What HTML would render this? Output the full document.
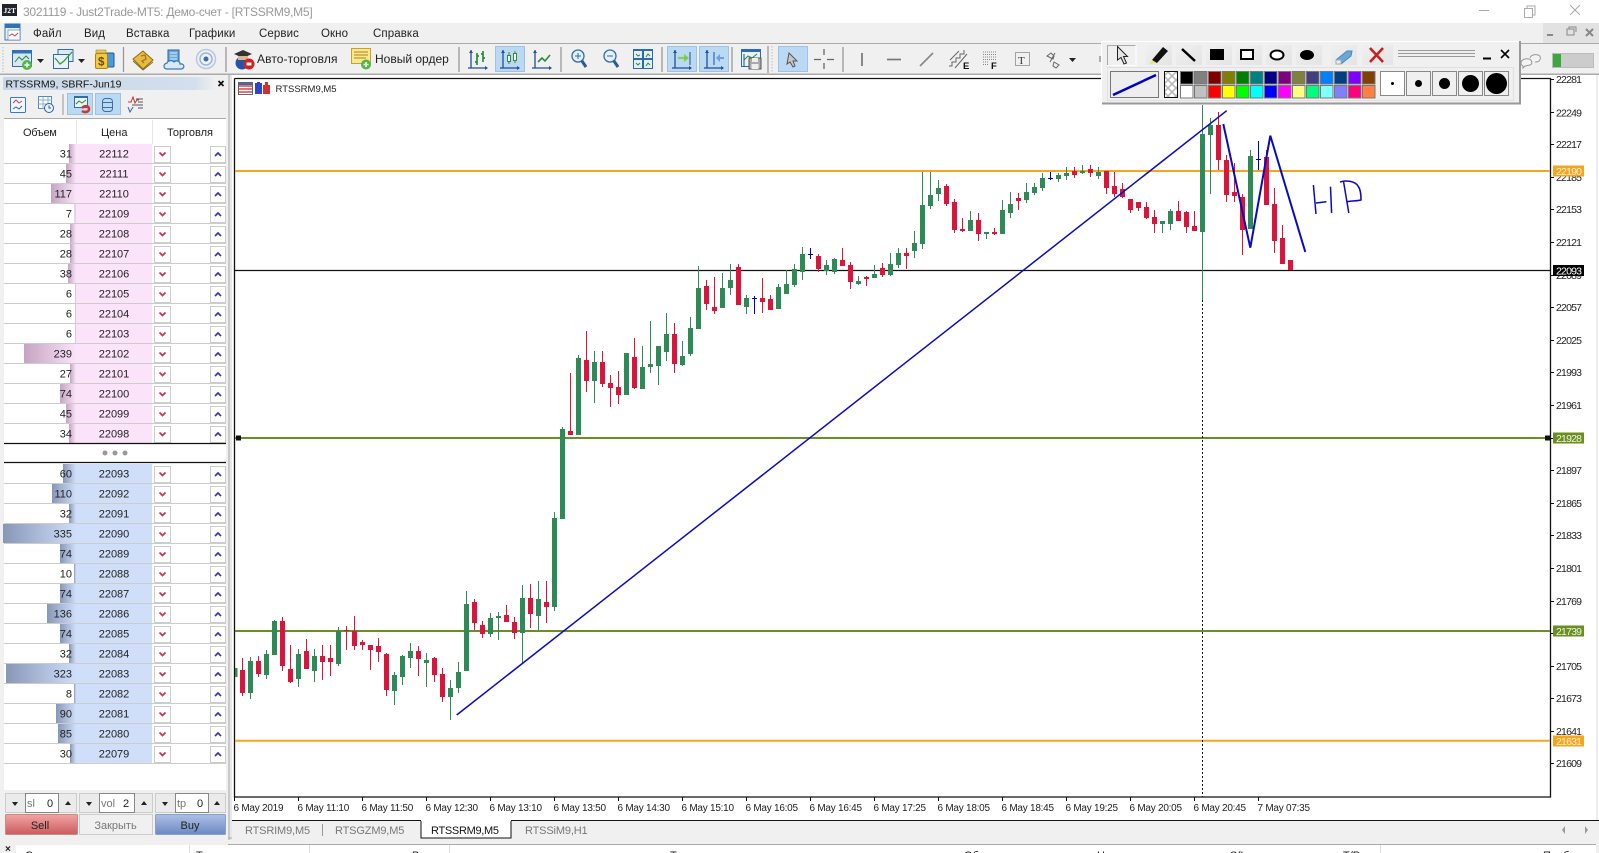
<!DOCTYPE html>
<html><head><meta charset="utf-8"><style>
html,body{margin:0;padding:0;background:#fff;width:1599px;height:853px;overflow:hidden}
svg{display:block;position:absolute;left:0;top:0}
text{font-family:"Liberation Sans","Noto Sans CJK SC",sans-serif;fill:#222}
</style></head><body>
<svg width="1599" height="853" viewBox="0 0 1599 853" xmlns="http://www.w3.org/2000/svg">
<defs>
<linearGradient id="pk" x1="0" x2="1" y1="0" y2="0"><stop offset="0" stop-color="#c4a4c2"/><stop offset="1" stop-color="#fbe3f9"/></linearGradient>
<linearGradient id="bl" x1="0" x2="1" y1="0" y2="0"><stop offset="0" stop-color="#8797b6"/><stop offset="1" stop-color="#cfdffa"/></linearGradient>
<linearGradient id="ttl" x1="0" x2="1" y1="0" y2="0"><stop offset="0" stop-color="#c8d8e8"/><stop offset=".9" stop-color="#d2dfec"/><stop offset="1" stop-color="#f0f0f0"/></linearGradient>
<linearGradient id="sell" x1="0" x2="0" y1="0" y2="1"><stop offset="0" stop-color="#f2a4a4"/><stop offset="1" stop-color="#c95c5c"/></linearGradient>
<linearGradient id="buy" x1="0" x2="0" y1="0" y2="1"><stop offset="0" stop-color="#aebfe6"/><stop offset="1" stop-color="#6c89c2"/></linearGradient>
<linearGradient id="btn" x1="0" x2="1" y1="0" y2="1"><stop offset="0" stop-color="#f0f0f0"/><stop offset="1" stop-color="#e4e4e4"/></linearGradient>
<pattern id="chk" width="8" height="8" patternUnits="userSpaceOnUse"><rect width="8" height="8" fill="#fff"/><path d="M0 0L4 4L8 0M0 8L4 4L8 8" stroke="#bbb" stroke-width="1.6" fill="none"/></pattern>
<g id="rw"><path d="M4 19.5H226" stroke="#ccc"/><rect x="154.5" y="2.5" width="16" height="16" fill="#fff" stroke="#ccc"/><rect x="210.5" y="2.5" width="15" height="16" fill="#fff" stroke="#ccc"/><path d="M159.5 8.5l3 3 3-3" fill="none" stroke="#d03048" stroke-width="1.7"/><path d="M215 12l3-3 3 3" fill="none" stroke="#3838b0" stroke-width="1.7"/></g>
<g id="ax"><path d="M3 1V19M0 19H19" stroke="#1f4f96" stroke-width="1.3" fill="none"/><path d="M1 4l2-3 2 3zM17 17l3 2-3 2z" fill="#1f4f96"/></g>
</defs>

<!-- window frames -->
<rect width="1599" height="853" fill="#f0f0f0"/>
<rect width="1599" height="23" fill="#fff"/>
<rect x="2" y="4" width="15" height="12" fill="#20242c"/>
<text x="3.5" y="13" font-size="7.5" font-weight="bold" style="fill:#fff;font-family:'Liberation Serif',serif">J2T</text>
<text x="23" y="16" font-size="12" style="fill:#999;letter-spacing:-.25px">3021119 - Just2Trade-MT5: Демо-счет - [RTSSRM9,M5]</text>
<path d="M1479 10.5H1489" stroke="#aaa"/><path d="M1524.5 8.5h8v9h-8zM1527 8.5v-2.5h8v9h-2.5" stroke="#aaa" fill="none"/><path d="M1570 5L1580 15M1580 5L1570 15" stroke="#aaa"/>

<!-- menu -->
<rect x="0" y="23" width="1599" height="20" fill="#f0f0f0"/>
<rect x="1543" y="23" width="56" height="20" fill="#e2e2e2"/>
<rect x="5" y="24" width="15" height="16" fill="#e8f0fa" stroke="#3a78b8"/><rect x="5" y="24" width="15" height="4" fill="#2f74b8"/><rect x="8" y="30" width="12" height="10" fill="#fff" stroke="#3a78b8" stroke-width=".6"/><path d="M9 36l3-2 3 2 3-3" stroke="#d04040" fill="none"/>
<g font-size="11.5" style="letter-spacing:.1px">
<text x="33" y="37">Файл</text><text x="84" y="37">Вид</text><text x="126" y="37">Вставка</text><text x="189" y="37">Графики</text><text x="259" y="37">Сервис</text><text x="321" y="37">Окно</text><text x="373" y="37">Справка</text>
</g>
<path d="M1547 35h6" stroke="#888" stroke-width="2"/><path d="M1567 29h7v6h-7zM1569 29v-2h7v5" stroke="#888" fill="none"/><path d="M1586 29l7 7M1593 29l-7 7" stroke="#888" stroke-width="2"/>

<!-- toolbar -->
<path d="M0 43.5H1599" stroke="#aaa"/>
<rect x="0" y="44" width="1599" height="30" fill="#f0f0f0"/>
<path d="M0 74.5H1599" stroke="#aaa" stroke-width="2"/>
<path d="M3 47V72" stroke="#bbb" stroke-dasharray="1.5 1.5"/>
<g stroke="#999" stroke-width="1.3"><path d="M123.5 47V72M226 47V72M459 47V72M561 47V72M662 47V72M732 47V72M768 46V73M843 47V72"/></g>
<g fill="#bcd9f3" stroke="#9cc2e4"><rect x="495.5" y="46.5" width="29" height="25"/><rect x="667.5" y="46.5" width="29" height="25"/><rect x="699.5" y="46.5" width="29" height="25"/><rect x="778.5" y="46.5" width="29" height="25"/></g>
<path d="M772 46V73" stroke="#bbb" stroke-dasharray="1.5 1.5"/>
<!-- new chart -->
<g transform="translate(12,50)"><rect x=".5" y=".5" width="19" height="16" fill="#d6e8f2" stroke="#2f6ca8"/><rect x=".5" y=".5" width="19" height="3" fill="#2f74b8"/><path d="M3 12l4-5 3 3 4-4 3 3" fill="none" stroke="#2c8a38"/><circle cx="15" cy="15" r="5" fill="#54b648"/><path d="M15 12.5v5M12.5 15h5" stroke="#fff" stroke-width="1.5"/></g>
<path d="M37 59h7l-3.5 4z" fill="#222"/>
<g transform="translate(53,49)"><rect x="5" y=".5" width="15" height="12" fill="#dcebf4" stroke="#2f6ca8"/><rect x=".5" y="5.5" width="15" height="14" fill="#e8f2f8" stroke="#2f6ca8"/><path d="M2 9l5 6 4-3 8-9" fill="none" stroke="#3a9a38" stroke-width="1.3"/></g>
<path d="M78 59h7l-3.5 4z" fill="#222"/>
<g transform="translate(95,49)"><rect x="7" y="4" width="12" height="14" rx="1" fill="#4a9ad8" stroke="#205a90"/><rect x="1" y="1" width="10" height="3" fill="#e8c860" stroke="#a88a20" stroke-width=".6"/><rect x=".5" y="4.5" width="12" height="15" rx="1.5" fill="#f4c840" stroke="#a88420"/><text x="3" y="16.5" font-size="11.5" font-weight="bold" style="fill:#704c00">$</text></g>
<g transform="translate(133,50)"><path d="M0 9L10 1L20 10L10 19z" fill="#e6bc40" stroke="#8a6c1c"/><path d="M0 11L10 20L20 12" fill="none" stroke="#8a6c1c"/><path d="M8 6l4-1 1 4-4 2 2 2" stroke="#a87818" fill="none" stroke-width="1.3"/></g>
<g transform="translate(164,49)"><rect x="4" y="1" width="11" height="12" fill="#6aa8e0" stroke="#2a62a0"/><path d="M6 4h7M6 7h7M6 10h7" stroke="#dceefc"/><path d="M3 20c-4 0-4-5 0-6 1-3 6-3 7-1 3-2 6-1 6 2 5-1 5 5 1 5z" fill="#d8e8f6" stroke="#3a78b8" stroke-width="1.2"/></g>
<g transform="translate(206,59)" fill="none"><circle r="9.5" stroke="#b8c8e0" stroke-width="1.5"/><circle r="6" stroke="#9cb4d8" stroke-width="1.5"/><circle r="2.5" fill="#3a6cb0"/></g>
<g transform="translate(234,49)"><circle cx="8" cy="14" r="6.5" fill="#2456a8"/><path d="M0 5L9 1L18 5L9 9z" fill="#333"/><path d="M4 7v4h10V7" fill="#d8b890"/><circle cx="15" cy="15" r="5.5" fill="#d02020"/><rect x="12.5" y="13.5" width="5" height="3" fill="#fff"/></g>
<text x="257" y="63" font-size="12" style="letter-spacing:.1px">Авто-торговля</text>
<g transform="translate(351,48)"><rect x=".5" y=".5" width="19" height="15" fill="#fbe88c" stroke="#c8a030"/><path d="M3 4h14M3 7h14M3 10h12" stroke="#a88420"/><circle cx="15" cy="16.5" r="5" fill="#54b648"/><path d="M15 14v5M12.5 16.5h5" stroke="#fff" stroke-width="1.5"/></g>
<text x="375" y="63" font-size="12">Новый ордер</text>
<!-- chart modes -->
<g transform="translate(468,49)"><use href="#ax"/><path d="M9 4v12M7 13h2M9 7h2M15 2v11M13 5h2M15 9h2" stroke="#2c8a38" stroke-width="1.7" fill="none"/></g>
<g transform="translate(500,49)"><use href="#ax"/><path d="M9 3v12M15 2v12" stroke="#2c8a38"/><rect x="7.5" y="6.5" width="3" height="6" fill="#fff" stroke="#2c8a38"/><rect x="13.5" y="4.5" width="3" height="7" fill="#fff" stroke="#2c8a38"/></g>
<g transform="translate(532,49)"><use href="#ax"/><path d="M6 13l4-4 3 3 5-6" stroke="#2c8a38" stroke-width="1.6" fill="none"/></g>
<!-- zoom -->
<g transform="translate(571,49)"><circle cx="7" cy="7" r="6" fill="#e4f0fa" stroke="#2f6ca8" stroke-width="1.3"/><path d="M4 7h6M7 4v6" stroke="#2f6ca8"/><path d="M11 12l4 6" stroke="#2a5a9c" stroke-width="3"/></g>
<g transform="translate(603,49)"><circle cx="7" cy="7" r="6" fill="#e4f0fa" stroke="#2f6ca8" stroke-width="1.3"/><path d="M4 7h6" stroke="#2f6ca8"/><path d="M11 12l4 6" stroke="#2a5a9c" stroke-width="3"/></g>
<g transform="translate(633,49)"><rect x=".5" y=".5" width="19" height="19" fill="#e4f0f6" stroke="#2a6ab0"/><path d="M0 10h20M10 0v20" stroke="#2a6ab0" stroke-width="2"/><rect x="0" y="0" width="20" height="2" fill="#2a6ab0"/><path d="M3 5l2 2 2-1M13 8l2-3 2 2M3 14l2 2 2-2M13 17l2-3 2 2" stroke="#2c8a38" fill="none"/></g>
<g transform="translate(672,49)"><use href="#ax"/><path d="M18 3v13" stroke="#1f4f96"/><path d="M6 8h6v-3l5 4-5 4v-3H6z" fill="#7cc850" stroke="#a8d890" stroke-width=".5"/></g>
<g transform="translate(704,49)"><use href="#ax"/><path d="M10 3v13" stroke="#1f4f96"/><path d="M20 8h-4v-3l-4 4 4 4v-3h4z" fill="#6aa0e0"/></g>
<g transform="translate(741,49)"><rect x=".5" y=".5" width="19" height="17" fill="#e8f2f8" stroke="#2a6ab0"/><rect x="0" y="0" width="20" height="3" fill="#2a6ab0"/><path d="M3 11l4-4 4 2 5-4" stroke="#2c8a38" fill="none"/><path d="M3 5v13" stroke="#1f4f96"/><rect x="8" y="9" width="12" height="11" fill="#aaa" stroke="#555"/><rect x="10.5" y="15" width="7" height="5" fill="#eee"/><rect x="11" y="9" width="6" height="4" fill="#eee"/></g>
<!-- drawing tools -->
<path d="M789 53L797 61L793 61L795 66L793 67L790 62L787 64Z" fill="#c8c8c8" stroke="#555"/>
<path d="M814 59.5h7M827 59.5h7M824 49v6M824 63v6" stroke="#666" stroke-width="1.3"/>
<path d="M862 53V66" stroke="#888" stroke-width="2"/>
<path d="M887 59.5h14" stroke="#777" stroke-width="1.7"/>
<path d="M920 66l13-13" stroke="#888" stroke-width="1.7"/>
<path d="M949 66h3v-4h4v-4h4v-4h4v-4M955 68l12-14M950 60l9-9" stroke="#666" fill="none"/>
<text x="963" y="69" font-size="9.5" font-weight="bold" style="fill:#111">E</text>
<path d="M983 52h14M983 54.5h14M983 57h14M983 59.5h14M983 62h6M983 64.5h6" stroke="#888" stroke-dasharray="1 1"/>
<text x="991" y="69" font-size="9.5" font-weight="bold" style="fill:#111">F</text>
<rect x="1015.5" y="52.5" width="14" height="13" fill="none" stroke="#555" stroke-dasharray="1 1"/>
<text x="1018" y="64" font-size="11" style="fill:#333;font-family:'Liberation Serif',serif">T</text>
<path d="M1047 56l4-3 3 3-1 3zM1050 62l5-9M1054 62l5 3-3 3-3-2z" stroke="#666" fill="none"/>
<path d="M1069 58h7l-3.5 4z" fill="#222"/>
<path d="M1100 56v6" stroke="#666"/>
<path d="M1521 63c0-3 4-5 8-4 3 1 4 5 1 6l-5 1-2 2 0-2c-2-1-2-2-2-3zM1530 58c1-3 5-4 8-3 3 1 3 4 1 6-1 1-3 1-4 1" fill="#f4f4f4" stroke="#999"/>
<rect x="1552" y="53" width="42" height="15" fill="#ccc"/><rect x="1552" y="53" width="9" height="15" fill="#3da83d"/><rect x="1552.5" y="53.5" width="41" height="14" fill="none" stroke="#bbb"/>

<!-- chart -->
<rect x="228" y="75" width="1371" height="745" fill="#fff"/>
<rect x="227" y="75" width="5" height="770" fill="#e8e8e8"/>
<path d="M229 75V840" stroke="#aaa"/>
<path d="M234.5 78.5V797H1550.5V78.5H234.5" fill="none" stroke="#111" stroke-width="1.3"/>
<path d="M1597 75V820" stroke="#ddd"/>
<!-- chart labels icons -->
<rect x="238.5" y="82.5" width="14" height="12" fill="#fff" stroke="#666"/><path d="M239 86h13M239 89h13M239 92h13" stroke="#d04848" stroke-width="1.5"/><path d="M239 84h13" stroke="#4466b0" stroke-width="2"/>
<rect x="255" y="83" width="7" height="11" fill="#2a48c8"/><rect x="263" y="85" width="7" height="9" fill="#d03030"/><rect x="265" y="82" width="3" height="3" fill="#d03030"/><rect x="257" y="82" width="3" height="3" fill="#2a48c8"/>
<text x="275.5" y="92" font-size="9.5" style="fill:#222">RTSSRM9,M5</text>

<!-- horizontal levels -->
<path d="M235 171H1550M235 740.7H1550" stroke="#f5a61e" stroke-width="2"/>
<path d="M235 270.5H1550" stroke="#111" stroke-width="1.3"/>
<path d="M235 438H1550M235 631H1550" stroke="#6b8e23" stroke-width="2"/>
<path d="M236 435.5h5v5h-5zM1545 435.5h5v5h-5z" fill="#111"/>

<!-- candles -->
<rect x="235" y="668" width="2.5" height="9" fill="#2e8b57"/>
<path fill="none" stroke="#2e8b57" stroke-width="1" d="M250.5 657V699M266.5 650V679M274.5 620V655M298.5 649V687M314.5 649V682M338.5 627V666M394.5 672V705M402.5 655V685M410.5 643V668M426.5 653V687M450.5 680V720M458.5 662V693M466.5 591V671M490.5 613V637M498.5 612V640M522.5 585V664M538.5 581V630M554.5 512V611M562.5 427V519M578.5 355V435M594.5 351V403M626.5 353V395M642.5 346V389M650.5 321V373M658.5 346V385M666.5 313V361M682.5 341V366M690.5 317V356M698.5 266V329M722.5 273V308M730.5 264V295M746.5 295V314M778.5 284V309M786.5 270V294M794.5 264V287M802.5 247V280M826.5 260V275M834.5 258V274M858.5 276V285M874.5 265V278M890.5 253V276M898.5 248V268M914.5 231V258M922.5 172V249M930.5 172V209M938.5 180V201M970.5 211V231M986.5 232V239M1002.5 200V234M1010.5 192V218M1026.5 183V203M1034.5 183V195M1042.5 173V191M1058.5 173V182M1066.5 167V180M1082.5 165V174M1098.5 167V179M1162.5 221V233M1170.5 209V230M1202.5 105V300M1210.5 118V194M1250.5 150V228"/>
<path fill="none" stroke="#2e8b57" stroke-width="5" d="M250.5 661V693M266.5 654V675M274.5 621V655M298.5 654V679M314.5 656V671M338.5 631V664M394.5 675V691M402.5 656V677M410.5 651V658M426.5 660V663M450.5 688V697M458.5 672V688M466.5 604V671M490.5 618V634M498.5 616V618M522.5 598V633M538.5 599V616M554.5 518V607M562.5 429V519M578.5 358V435M594.5 362V381M626.5 353V395M642.5 367V389M650.5 364V367M658.5 346V366M666.5 334V352M682.5 356V365M690.5 328V354M698.5 288V329M722.5 288V308M730.5 280V288M746.5 298V307M778.5 287V309M786.5 284V294M794.5 269V285M802.5 254V272M826.5 265V271M834.5 259V272M858.5 281V284M874.5 274V278M890.5 264V275M898.5 253V265M914.5 243V251M922.5 205V244M930.5 195V206M938.5 188V194M970.5 220V231M986.5 232V234M1002.5 210V234M1010.5 204V213M1026.5 192V200M1034.5 187V193M1042.5 178V188M1058.5 175V179M1066.5 173V176M1082.5 171V173M1098.5 172V176M1162.5 221V224M1170.5 211V224M1202.5 134V232M1210.5 125V135M1250.5 156V229"/>
<path fill="none" stroke="#dc143c" stroke-width="1" d="M242.5 658V696M258.5 656V677M282.5 617V671M290.5 645V683M306.5 639V669M322.5 645V680M330.5 645V676M346.5 626V650M354.5 616V650M362.5 640V650M370.5 645V670M378.5 638V662M386.5 653V696M418.5 646V676M434.5 657V682M442.5 668V702M474.5 599V630M482.5 621V638M506.5 605V622M514.5 617V639M530.5 584V628M546.5 581V623M570.5 373V435M586.5 331V392M602.5 351V387M610.5 375V407M618.5 371V404M634.5 338V389M674.5 323V373M706.5 280V310M714.5 277V314M738.5 264V305M762.5 278V313M770.5 295V310M818.5 254V272M842.5 248V266M850.5 262V289M866.5 276V286M882.5 263V277M906.5 248V269M946.5 184V206M954.5 199V233M962.5 218V232M978.5 213V241M994.5 228V235M1018.5 193V210M1074.5 167V178M1090.5 165V177M1106.5 171V194M1114.5 172V197M1122.5 183V198M1130.5 199V213M1138.5 202V211M1146.5 202V219M1154.5 210V233M1178.5 201V221M1186.5 211V233M1194.5 211V231M1218.5 112V170M1226.5 155V202M1234.5 163V202M1242.5 194V255M1266.5 150V205M1274.5 188V253M1282.5 225V264M1290.5 260V270"/>
<path fill="none" stroke="#dc143c" stroke-width="5" d="M242.5 670V693M258.5 661V674M282.5 621V666M290.5 669V682M306.5 651V669M322.5 656V662M330.5 658V662M346.5 630V631M354.5 631V646M362.5 642V645M370.5 645V650M378.5 646V652M386.5 654V690M418.5 651V659M434.5 658V675M442.5 674V697M474.5 602V623M482.5 625V634M506.5 615V622M514.5 622V633M530.5 598V614M546.5 602V607M570.5 431V435M586.5 360V381M602.5 362V384M610.5 383V388M618.5 387V395M634.5 357V388M674.5 334V364M706.5 286V304M714.5 307V311M738.5 267V305M762.5 298V302M770.5 299V310M818.5 256V269M842.5 260V266M850.5 265V282M866.5 277V279M882.5 268V275M906.5 253V256M946.5 186V204M954.5 202V230M962.5 229V231M978.5 220V234M994.5 232V234M1018.5 198V201M1074.5 171V175M1090.5 169V173M1106.5 171V188M1114.5 186V194M1122.5 189V197M1130.5 199V210M1138.5 202V208M1146.5 207V218M1154.5 217V224M1178.5 211V221M1186.5 212V227M1194.5 226V231M1218.5 125V160M1226.5 160V195M1234.5 192V196M1242.5 197V230M1266.5 157V205M1274.5 204V241M1282.5 238V264M1290.5 260V270"/>
<path fill="none" stroke="#0000c0" stroke-width="1" d="M754.5 296V314M752 298.5H757M810.5 248V259M808 254.5H813M1050.5 172V180M1048 178.5H1053M1258.5 141V170M1256 159.5H1261"/>
<path d="M1202.5 300V797" stroke="#111" stroke-dasharray="2 2"/>

<!-- drawn lines -->
<path d="M456.7 715L1226.7 110.7" stroke="#0a0ac0" stroke-width="1.5" fill="none"/>
<path d="M1223.3 124L1250.3 247.7L1270.3 135.7L1305.3 252" stroke="#0a0ac0" stroke-width="2" fill="none"/>
<path d="M1313.4 185L1316 214M1316 203L1326.4 201.7M1330.5 186.7L1331.6 213M1343.6 182L1348.8 213M1340 182C1346 180 1355 181 1358 186C1361 190 1361 196 1361 200C1357 201 1351 201 1347 201.7" stroke="#0a0ac0" stroke-width="1.5" fill="none"/>

<!-- price axis -->
<g stroke="#111"><path d="M1550 79.5h4M1550 112.5h4M1550 144.5h4M1550 177.5h4M1550 209.5h4M1550 242.5h4M1550 275.5h4M1550 307.5h4M1550 340.5h4M1550 372.5h4M1550 405.5h4M1550 438.5h4M1550 470.5h4M1550 503.5h4M1550 535.5h4M1550 568.5h4M1550 601.5h4M1550 633.5h4M1550 666.5h4M1550 698.5h4M1550 731.5h4M1550 763.5h4"/></g>
<g font-size="10.5" style="letter-spacing:-.8px">
<text x="1556" y="83">22281</text><text x="1556" y="116.5">22249</text><text x="1556" y="148">22217</text><text x="1556" y="181">22185</text><text x="1556" y="213">22153</text><text x="1556" y="246">22121</text><text x="1556" y="279">22089</text><text x="1556" y="311">22057</text><text x="1556" y="344">22025</text><text x="1556" y="376">21993</text><text x="1556" y="409">21961</text><text x="1556" y="474">21897</text><text x="1556" y="507">21865</text><text x="1556" y="539">21833</text><text x="1556" y="572">21801</text><text x="1556" y="605">21769</text><text x="1556" y="670">21705</text><text x="1556" y="702">21673</text><text x="1556" y="735">21641</text><text x="1556" y="767">21609</text>
</g>
<rect x="1553" y="165.5" width="31" height="11" fill="#f5a61e"/><rect x="1553" y="265" width="31" height="11" fill="#000"/><rect x="1553" y="432.5" width="31" height="11" fill="#6b8e23"/><rect x="1553" y="625.5" width="31" height="11" fill="#6b8e23"/><rect x="1553" y="735.5" width="31" height="11" fill="#f5a61e"/>
<g font-size="10.5" style="letter-spacing:-.8px">
<text x="1556" y="175" style="fill:#fff3d8">22190</text><text x="1556" y="274.5" style="fill:#fff">22093</text><text x="1556" y="442" style="fill:#f4f4e0">21928</text><text x="1556" y="635" style="fill:#f4f4e0">21739</text><text x="1556" y="745" style="fill:#fff3d8">21631</text>
</g>
<!-- time axis -->
<path d="M234.5 797v4M298.5 797v4M362.5 797v4M426.5 797v4M490.5 797v4M554.5 797v4M618.5 797v4M682.5 797v4M746.5 797v4M810.5 797v4M874.5 797v4M938.5 797v4M1002.5 797v4M1066.5 797v4M1130.5 797v4M1194.5 797v4M1258.5 797v4" stroke="#111"/>
<g font-size="10" style="letter-spacing:-.25px">
<text x="233.5" y="811">6 May 2019</text><text x="297.5" y="811">6 May 11:10</text><text x="361.5" y="811">6 May 11:50</text><text x="425.5" y="811">6 May 12:30</text><text x="489.5" y="811">6 May 13:10</text><text x="553.5" y="811">6 May 13:50</text><text x="617.5" y="811">6 May 14:30</text><text x="681.5" y="811">6 May 15:10</text><text x="745.5" y="811">6 May 16:05</text><text x="809.5" y="811">6 May 16:45</text><text x="873.5" y="811">6 May 17:25</text><text x="937.5" y="811">6 May 18:05</text><text x="1001.5" y="811">6 May 18:45</text><text x="1065.5" y="811">6 May 19:25</text><text x="1129.5" y="811">6 May 20:05</text><text x="1193.5" y="811">6 May 20:45</text><text x="1257.5" y="811">7 May 07:35</text>
</g>

<!-- tabs -->
<rect x="232" y="820" width="1367" height="20" fill="#f0f0f0"/>
<path d="M232 820.5H1599" stroke="#111"/>
<path d="M232 840.5H1599" stroke="#ddd"/>
<path d="M322.5 824V836" stroke="#999"/>
<rect x="421" y="820" width="90" height="18" fill="#fff"/><path d="M421 820.5V838H511V820.5" fill="none" stroke="#111"/><path d="M421 820.5H511" stroke="#fff" stroke-width="1.2"/>
<g font-size="11" style="letter-spacing:-.15px">
<text x="245" y="834" style="fill:#777">RTSRIM9,M5</text><text x="335" y="834" style="fill:#777">RTSGZM9,M5</text><text x="431" y="834" style="fill:#111;letter-spacing:-.3px">RTSSRM9,M5</text><text x="525" y="834" style="fill:#777">RTSSiM9,H1</text>
</g>
<path d="M1565 826v8l-3-4zM1585 826v8l3-4z" fill="#999"/>

<!-- bottom strip -->
<rect x="0" y="840" width="1599" height="13" fill="#f0f0f0"/>
<rect x="16" y="845" width="1580" height="8" fill="#fff"/>
<path d="M16 844.5H1596" stroke="#aaa"/>
<path d="M189.5 845V853M309.5 845V853M449.5 845V853M1380.5 845V853" stroke="#ddd"/>
<text x="5" y="852" font-size="10" font-weight="bold" style="fill:#222">×</text>
<g font-size="11">
<text x="25" y="859">Символ</text><text x="196" y="859">Тикет</text><text x="412" y="859">Время</text><text x="670" y="859">Тип</text><text x="964" y="859">Объем</text><text x="1097" y="859">Цена</text><text x="1230" y="859">S/L</text><text x="1343" y="859">T/P</text><text x="1543" y="859">Прибыль</text>
</g>

<!-- left panel -->
<rect x="0" y="75" width="228" height="770" fill="#f0f0f0"/>
<rect x="3" y="77" width="213" height="13" fill="url(#ttl)"/>
<text x="5.5" y="87.5" font-size="10.5" style="fill:#111">RTSSRM9, SBRF-Jun19</text>
<path d="M218.5 81l5 5M223.5 81l-5 5" stroke="#111" stroke-width="1.7"/>
<g fill="#bcd9f3" stroke="#9cc2e4"><rect x="67.5" y="93.5" width="25" height="21"/><rect x="95.5" y="93.5" width="25" height="21"/></g>
<path d="M63 94V115" stroke="#999"/>
<rect x="10.5" y="97.5" width="15" height="15" rx="1" fill="#f2f8fd" stroke="#3a78c0"/><path d="M13 103l3-3 3 3 3-2" stroke="#d04040" fill="none"/><path d="M13 109l3-2 3 2 3-3" stroke="#2a6ab0" fill="none"/>
<g transform="translate(38,96)"><rect x=".5" y=".5" width="13" height="12" fill="#fff" stroke="#5a8ab8"/><path d="M1 4h13M1 8h13M5 1v12M10 1v12" stroke="#8ab0d0"/><circle cx="11" cy="12" r="4.5" fill="#e8f2fa" stroke="#2a62a0"/><path d="M11 9.5V12h2" stroke="#2a62a0" fill="none"/></g>
<g transform="translate(74,96)"><rect x=".5" y=".5" width="13" height="11" fill="#e8f4f0" stroke="#2f6ca8"/><rect x="0" y="0" width="14" height="2" fill="#2f6ca8"/><path d="M2 8l3-3 3 2 4-3" stroke="#2c8a38" fill="none"/><path d="M8 12c3-3 7-2 7 1s-4 4-7 2" fill="none" stroke="#d03828" stroke-width="2.5"/></g>
<g transform="translate(102,96)" fill="none" stroke="#3a6ea8"><rect x=".5" y="2.5" width="10" height="13" rx="3"/><path d="M.5 6.5h10M.5 11.5h10"/></g>
<g transform="translate(128,95)" fill="none"><path d="M0 7h3l2-5 2 6 2-3h2" stroke="#d03030"/><path d="M8 4h7M10 7h5M4 10h11M10 13h5" stroke="#555"/><path d="M0 12l2 5 3-5" stroke="#2a62b0"/></g>

<rect x="4" y="118" width="222" height="672" fill="#fff"/>
<path d="M4 118.5H226" stroke="#aaa"/>
<path d="M76.5 120V144M152.5 120V144" stroke="#e6e6e6"/>
<g font-size="11">
<text x="23" y="136" style="letter-spacing:-.3px">Объем</text><text x="101" y="136">Цена</text><text x="167" y="136">Торговля</text>
</g>
<rect x="76" y="144" width="76" height="299" fill="#fbe3f9"/>
<rect x="76" y="464" width="76" height="300" fill="#cfdffa"/>
<g fill="url(#pk)"><rect x="69" y="144" width="7" height="19"/><rect x="66" y="164" width="10" height="19"/><rect x="51" y="184" width="25" height="19"/><rect x="74.5" y="204" width="1.5" height="19"/><rect x="70" y="224" width="6" height="19"/><rect x="70" y="244" width="6" height="19"/><rect x="68" y="264" width="8" height="19"/><rect x="75" y="284" width="1" height="19"/><rect x="75" y="304" width="1" height="19"/><rect x="75" y="324" width="1" height="19"/><rect x="24" y="344" width="52" height="19"/><rect x="70" y="364" width="6" height="19"/><rect x="60" y="384" width="16" height="19"/><rect x="66" y="404" width="10" height="19"/><rect x="69" y="424" width="7" height="19"/></g>
<g fill="url(#bl)"><rect x="63" y="464" width="13" height="19"/><rect x="52" y="484" width="24" height="19"/><rect x="69" y="504" width="7" height="19"/><rect x="3" y="524" width="73" height="19"/><rect x="60" y="544" width="16" height="19"/><rect x="74" y="564" width="2" height="19"/><rect x="60" y="584" width="16" height="19"/><rect x="47" y="604" width="29" height="19"/><rect x="60" y="624" width="16" height="19"/><rect x="69" y="644" width="7" height="19"/><rect x="6" y="664" width="70" height="19"/><rect x="74" y="684" width="2" height="19"/><rect x="56" y="704" width="20" height="19"/><rect x="58" y="724" width="18" height="19"/><rect x="70" y="744" width="6" height="19"/></g>
<use href="#rw" y="144"/><use href="#rw" y="164"/><use href="#rw" y="184"/><use href="#rw" y="204"/><use href="#rw" y="224"/><use href="#rw" y="244"/><use href="#rw" y="264"/><use href="#rw" y="284"/><use href="#rw" y="304"/><use href="#rw" y="324"/><use href="#rw" y="344"/><use href="#rw" y="364"/><use href="#rw" y="384"/><use href="#rw" y="404"/><use href="#rw" y="424"/>
<use href="#rw" y="464"/><use href="#rw" y="484"/><use href="#rw" y="504"/><use href="#rw" y="524"/><use href="#rw" y="544"/><use href="#rw" y="564"/><use href="#rw" y="584"/><use href="#rw" y="604"/><use href="#rw" y="624"/><use href="#rw" y="644"/><use href="#rw" y="664"/><use href="#rw" y="684"/><use href="#rw" y="704"/><use href="#rw" y="724"/><use href="#rw" y="744"/>
<rect x="4" y="444" width="222" height="19" fill="#fff"/>
<path d="M4 443.5H226M4 462.5H226" stroke="#111" stroke-width="1.2"/>
<circle cx="105" cy="453" r="2.5" fill="#999"/><circle cx="115" cy="453" r="2.5" fill="#999"/><circle cx="125" cy="453" r="2.5" fill="#999"/>
<g font-size="11" text-anchor="end">
<text x="72" y="157.5">31</text><text x="72" y="177.5">45</text><text x="72" y="197.5">117</text><text x="72" y="217.5">7</text><text x="72" y="237.5">28</text><text x="72" y="257.5">28</text><text x="72" y="277.5">38</text><text x="72" y="297.5">6</text><text x="72" y="317.5">6</text><text x="72" y="337.5">6</text><text x="72" y="357.5">239</text><text x="72" y="377.5">27</text><text x="72" y="397.5">74</text><text x="72" y="417.5">45</text><text x="72" y="437.5">34</text>
<text x="72" y="477.5">60</text><text x="72" y="497.5">110</text><text x="72" y="517.5">32</text><text x="72" y="537.5">335</text><text x="72" y="557.5">74</text><text x="72" y="577.5">10</text><text x="72" y="597.5">74</text><text x="72" y="617.5">136</text><text x="72" y="637.5">74</text><text x="72" y="657.5">32</text><text x="72" y="677.5">323</text><text x="72" y="697.5">8</text><text x="72" y="717.5">90</text><text x="72" y="737.5">85</text><text x="72" y="757.5">30</text>
</g>
<g font-size="11" text-anchor="middle">
<text x="114" y="157.5">22112</text><text x="114" y="177.5">22111</text><text x="114" y="197.5">22110</text><text x="114" y="217.5">22109</text><text x="114" y="237.5">22108</text><text x="114" y="257.5">22107</text><text x="114" y="277.5">22106</text><text x="114" y="297.5">22105</text><text x="114" y="317.5">22104</text><text x="114" y="337.5">22103</text><text x="114" y="357.5">22102</text><text x="114" y="377.5">22101</text><text x="114" y="397.5">22100</text><text x="114" y="417.5">22099</text><text x="114" y="437.5">22098</text>
<text x="114" y="477.5">22093</text><text x="114" y="497.5">22092</text><text x="114" y="517.5">22091</text><text x="114" y="537.5">22090</text><text x="114" y="557.5">22089</text><text x="114" y="577.5">22088</text><text x="114" y="597.5">22087</text><text x="114" y="617.5">22086</text><text x="114" y="637.5">22085</text><text x="114" y="657.5">22084</text><text x="114" y="677.5">22083</text><text x="114" y="697.5">22082</text><text x="114" y="717.5">22081</text><text x="114" y="737.5">22080</text><text x="114" y="757.5">22079</text>
</g>

<!-- bottom spinners -->
<rect x="4" y="792" width="222" height="46" fill="#f0f0f0"/>
<g fill="#ebebeb" stroke="#ccc"><rect x="5.5" y="793.5" width="71" height="19"/><rect x="79.5" y="793.5" width="73" height="19"/><rect x="155.5" y="793.5" width="70" height="19"/></g>
<g fill="#fff" stroke="#888"><rect x="25.5" y="793.5" width="33" height="19"/><rect x="99.5" y="793.5" width="35" height="19"/><rect x="175.5" y="793.5" width="33" height="19"/></g>
<path d="M12 802h6l-3 4zM86 802h6l-3 4zM162 802h6l-3 4zM65 805h6l-3-4zM141 805h6l-3-4zM214 805h6l-3-4z" fill="#222"/>
<g font-size="11"><text x="27" y="807" style="fill:#777">sl</text><text x="47" y="807">0</text><text x="101" y="807" style="fill:#777">vol</text><text x="123" y="807">2</text><text x="177" y="807" style="fill:#777">tp</text><text x="197" y="807">0</text></g>
<rect x="5.5" y="814.5" width="72" height="20" rx="1" fill="url(#sell)" stroke="#c88"/>
<rect x="79.5" y="814.5" width="73" height="20" fill="#f0f0f0" stroke="#ccc"/>
<rect x="155.5" y="814.5" width="70" height="20" rx="1" fill="url(#buy)" stroke="#8aa0cc"/>
<g font-size="11" text-anchor="middle"><text x="40" y="829">Sell</text><text x="115.5" y="829" style="fill:#777">Закрыть</text><text x="190" y="829">Buy</text></g>
<path d="M228 838H232" stroke="#aaa"/>

<!-- floating drawing toolbar -->
<rect x="1101.5" y="41.5" width="418" height="62" fill="#f0f0f0" stroke="#fff"/>
<path d="M1102 103.5H1520V41" fill="none" stroke="#999" stroke-width="2"/>
<g fill="url(#btn)"><rect x="1146" y="45" width="26" height="20"/><rect x="1176" y="45" width="26" height="20"/><rect x="1206" y="45" width="26" height="20"/><rect x="1236" y="45" width="26" height="20"/><rect x="1266" y="45" width="26" height="20"/><rect x="1296" y="45" width="26" height="20"/><rect x="1331" y="45" width="26" height="20"/><rect x="1362" y="45" width="31" height="20"/></g>
<path d="M1107.5 65V45.5H1136" fill="none" stroke="#aaa"/><path d="M1107.5 65.5H1136V45" fill="none" stroke="#fff"/>
<path d="M1117.5 46.5V60L1121 57.5L1124 64L1126.5 63L1123.5 56.5H1127.5Z" fill="#e6e6e6" stroke="#222"/>
<path d="M1152 60l11-13 5 4-11 12z" fill="#111"/><path d="M1149.5 64l3-4 3 3z" fill="#e8e850"/>
<path d="M1182 49L1195 61" stroke="#000" stroke-width="2.5"/>
<rect x="1210" y="49" width="14" height="11" fill="#000"/>
<rect x="1241" y="50" width="12" height="9" fill="#fff" stroke="#000" stroke-width="2"/>
<ellipse cx="1277" cy="55" rx="6.5" ry="4.5" fill="#fff" stroke="#000" stroke-width="2"/>
<ellipse cx="1307" cy="55" rx="7" ry="5" fill="#000"/>
<path d="M1336 60l11-9 5 0-1 5-10 8-5 0z" fill="#6aa8d8" stroke="#4a88b8"/><path d="M1336 60l5 0 0 4-5 0z" fill="#eee" stroke="#aaa"/>
<path d="M1370 48L1383 62M1383 48L1370 62" stroke="#c81e1e" stroke-width="2.5"/>
<path d="M1398 50.5H1475M1398 53.5H1475M1398 56.5H1475" stroke="#999"/>
<path d="M1483 58.5H1491" stroke="#000" stroke-width="2"/>
<path d="M1501 50L1509 58M1509 50L1501 58" stroke="#000" stroke-width="1.6"/>
<rect x="1107.5" y="67.5" width="406" height="33" fill="none" stroke="#e0e0e0"/>
<rect x="1110.5" y="71.5" width="48" height="26" fill="#eee" stroke="#777"/>
<path d="M1113 95L1156 75" stroke="#0000c8" stroke-width="2.5"/>
<rect x="1164.5" y="71.5" width="13" height="26" fill="url(#chk)" stroke="#111"/>
<g stroke="#777" stroke-width="1">
<rect x="1180.5" y="71.5" width="12.5" height="12.5" fill="#000"/><rect x="1194.5" y="71.5" width="12.5" height="12.5" fill="#808080"/><rect x="1208.5" y="71.5" width="12.5" height="12.5" fill="#800000"/><rect x="1222.5" y="71.5" width="12.5" height="12.5" fill="#808000"/><rect x="1236.5" y="71.5" width="12.5" height="12.5" fill="#008000"/><rect x="1250.5" y="71.5" width="12.5" height="12.5" fill="#008080"/><rect x="1264.5" y="71.5" width="12.5" height="12.5" fill="#000080"/><rect x="1278.5" y="71.5" width="12.5" height="12.5" fill="#800080"/><rect x="1292.5" y="71.5" width="12.5" height="12.5" fill="#808040"/><rect x="1306.5" y="71.5" width="12.5" height="12.5" fill="#404080"/><rect x="1320.5" y="71.5" width="12.5" height="12.5" fill="#0080ff"/><rect x="1334.5" y="71.5" width="12.5" height="12.5" fill="#004080"/><rect x="1348.5" y="71.5" width="12.5" height="12.5" fill="#8000ff"/><rect x="1362.5" y="71.5" width="12.5" height="12.5" fill="#804000"/>
<rect x="1180.5" y="85.5" width="12.5" height="12.5" fill="#fff"/><rect x="1194.5" y="85.5" width="12.5" height="12.5" fill="#c0c0c0"/><rect x="1208.5" y="85.5" width="12.5" height="12.5" fill="#f00"/><rect x="1222.5" y="85.5" width="12.5" height="12.5" fill="#ff0"/><rect x="1236.5" y="85.5" width="12.5" height="12.5" fill="#0f0"/><rect x="1250.5" y="85.5" width="12.5" height="12.5" fill="#0ff"/><rect x="1264.5" y="85.5" width="12.5" height="12.5" fill="#00f"/><rect x="1278.5" y="85.5" width="12.5" height="12.5" fill="#f0f"/><rect x="1292.5" y="85.5" width="12.5" height="12.5" fill="#ffff80"/><rect x="1306.5" y="85.5" width="12.5" height="12.5" fill="#00ff80"/><rect x="1320.5" y="85.5" width="12.5" height="12.5" fill="#80ffff"/><rect x="1334.5" y="85.5" width="12.5" height="12.5" fill="#8080ff"/><rect x="1348.5" y="85.5" width="12.5" height="12.5" fill="#ff0080"/><rect x="1362.5" y="85.5" width="12.5" height="12.5" fill="#ff8040"/>
</g>
<g stroke="#888"><rect x="1380.5" y="71.5" width="24" height="24" fill="#fff"/><rect x="1406.5" y="71.5" width="24" height="24" fill="#f0f0f0"/><rect x="1432.5" y="71.5" width="24" height="24" fill="#f0f0f0"/><rect x="1458.5" y="71.5" width="24" height="24" fill="#f0f0f0"/><rect x="1484.5" y="71.5" width="24" height="24" fill="#f0f0f0"/></g>
<circle cx="1392.5" cy="83.5" r="1.5" fill="#000"/><circle cx="1418.5" cy="83.5" r="3.5" fill="#000"/><circle cx="1444.5" cy="83.5" r="5.5" fill="#000"/><circle cx="1470.5" cy="83.5" r="8.5" fill="#000"/><circle cx="1496.5" cy="83.5" r="10.5" fill="#000"/>
</svg>
</body></html>
